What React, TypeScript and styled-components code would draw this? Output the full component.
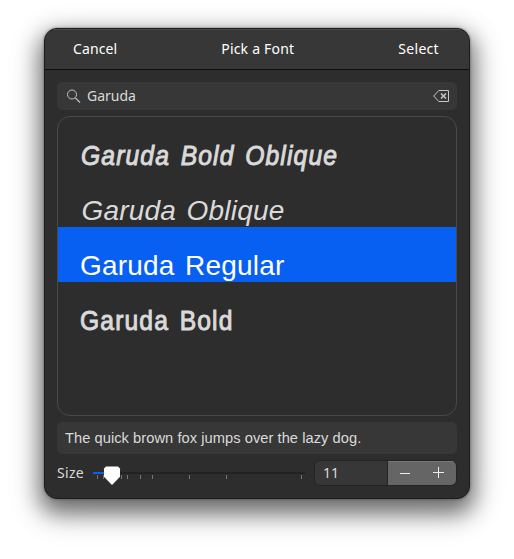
import React from "react";
import styled, { createGlobalStyle } from "styled-components";

const Global = createGlobalStyle`
  * { box-sizing: border-box; }
  body { margin: 0; background: #fff; overflow: hidden; }
`;

const Desktop = styled.main`
  width: 514px;
  height: 559px;
  padding: 28px 44px 0;
  font-family: "Noto Sans", sans-serif;
`;

const Dialog = styled.section`
  width: 426px;
  height: 471px;
  border-radius: 13px;
  overflow: hidden;
  border: 1px solid #1c1c1c;
  background: #2d2d2d;
  box-shadow: 0 0 3px rgba(0, 0, 0, 0.4), 0 10px 22px 4px rgba(0, 0, 0, 0.52), 0 12px 36px 4px rgba(0, 0, 0, 0.14);
`;

const Header = styled.header`
  display: flex;
  justify-content: space-between;
  height: 41px;
  padding: 0 30px 0 28px;
  background: #373737;
  border-bottom: 1px solid #101010;
  box-shadow: inset 0 1px #4a4a4a;
`;

const Label = styled.span<{ $w?: number; $space?: number; $color?: string; $line?: number }>`
  width: ${(p) => (p.$w ? `${p.$w}px` : "auto")};
  font-size: 14px;
  line-height: ${(p) => p.$line ?? 39}px;
  letter-spacing: ${(p) => p.$space ?? 0}px;
  color: ${(p) => p.$color ?? "#fff"};
  white-space: nowrap;
`;

const HeaderButton = styled.button`
  padding: 0;
  border: 0;
  background: none;
  font-family: inherit;
  display: flex;
`;

const Content = styled.div`
  display: flex;
  flex-direction: column;
  padding: 12px;
`;

const SearchField = styled.div`
  display: flex;
  align-items: center;
  height: 28px;
  border-radius: 5px;
  background: #373737;
  padding: 0 8px 0 9px;
`;

const SearchText = styled.div`
  flex: 1;
  display: flex;
  padding-left: 6px;
`;

const FontList = styled.ul`
  list-style: none;
  height: 300px;
  margin: 6px 0;
  padding: 0;
  border: 1px solid #494949;
  border-radius: 13px;
  overflow: hidden;
`;

const FontRow = styled.li<{ $selected?: boolean }>`
  height: 55px;
  padding: 22px 0 0 22px;
  background: ${(p) => (p.$selected ? "#0860f2" : "transparent")};
  color: ${(p) => (p.$selected ? "#fff" : "#dadada")};
`;

/* The bold faces are a thickened, slightly condensed regular, which keeps their open shapes. */
const FontName = styled.span<{ $bold?: boolean; $italic?: boolean; $shift: number }>`
  display: block;
  width: max-content;
  margin-left: ${(p) => p.$shift}px;
  font: 28px/34px "Liberation Sans", Arial, sans-serif;
  font-style: ${(p) => (p.$italic ? "italic" : "normal")};
  word-spacing: ${(p) => (p.$bold ? 3 : 2.5)}px;
  letter-spacing: ${(p) => (p.$bold ? 1.3 : 0.2)}px;
  -webkit-text-stroke: ${(p) => (p.$bold ? "1px currentColor" : "0")};
  transform: ${(p) => (p.$bold ? "scaleX(0.88)" : "none")};
  transform-origin: left;
  white-space: nowrap;
`;

const Preview = styled.div`
  height: 32px;
  border-radius: 5px;
  background: #373737;
  padding-left: 8px;
  color: #dadada;
  font: 14.67px/32px "Liberation Sans", Arial, sans-serif;
  letter-spacing: 0.05px;
`;

const SizeRow = styled.div`
  display: flex;
  align-items: center;
  height: 26px;
  margin-top: 6px;
`;

const Slider = styled.svg`
  display: block;
  width: 212px;
  height: 26px;
  margin-right: 9px;
  overflow: visible;
`;

const Spin = styled.div`
  display: flex;
  width: 143px;
  height: 26px;
  border: 1px solid #242424;
  border-radius: 6px;
  overflow: hidden;
`;

const SpinValue = styled.div`
  display: flex;
  width: 73px;
  padding-left: 8px;
  background: #373737;
  border-right: 1px solid #242424;
`;

const SpinButtons = styled.div`
  flex: 1;
  background: #656565;
  box-shadow: inset 0 1px #777;
`;

const fonts = [
  { name: "Garuda Bold Oblique", bold: true, italic: true, shift: 1 },
  { name: "Garuda Oblique", italic: true, shift: 1.5 },
  { name: "Garuda Regular", selected: true, shift: 0 },
  { name: "Garuda Bold", bold: true, shift: 0 },
];

const ticks = [4, 10, 28, 34, 47, 59, 96, 133, 208];

export default function App() {
  return (
    <Desktop>
      <Global />
      <Dialog>
        <Header>
          <HeaderButton><Label $space={0.1}>Cancel</Label></HeaderButton>
          <Label $space={0.2}>Pick a Font</Label>
          <HeaderButton><Label $space={0.3}>Select</Label></HeaderButton>
        </Header>
        <Content>
          <SearchField>
            <svg width="15" height="16" viewBox="0 0 15 16" fill="none" stroke="#c4c4c4">
              <circle cx="6" cy="6.5" r="4.5" />
              <path d="M9.3 9.8 14 14.5" strokeWidth="1.2" />
            </svg>
            <SearchText><Label $color="#dadada" $line={28}>Garuda</Label></SearchText>
            <svg width="16" height="14" viewBox="0 0 16 14" fill="none" stroke="#c8c8c8">
              <path d="M5.8 1.5h9.7v11H5.8L.7 7z" />
              <path d="m8 4.5 5 5m0-5-5 5" strokeWidth="1.5" />
            </svg>
          </SearchField>
          <FontList>
            {fonts.map((f) => (
              <FontRow key={f.name} $selected={f.selected}>
                <FontName $bold={f.bold} $italic={f.italic} $shift={f.shift}>{f.name}</FontName>
              </FontRow>
            ))}
          </FontList>
          <Preview>The quick brown fox jumps over the lazy dog.</Preview>
          <SizeRow>
            <Label $w={36} $color="#dadada" $line={28} $space={0.3}>Size</Label>
            <Slider viewBox="0 0 212 26">
              <path d="M0 13h212" stroke="#222" strokeWidth="2" />
              <path d="M0 13h15" stroke="#0860f2" strokeWidth="2" />
              {ticks.map((x) => <path key={x} d={`M${x + 0.5} 15v4`} stroke="#777" />)}
              <path d="M13 6.5h12l2 2v8.2L19 25l-8-8.300V8.500z" fill="#fff" />
            </Slider>
            <Spin>
              <SpinValue><Label $color="#dadada" $line={24}>11</Label></SpinValue>
              <SpinButtons>
                <svg width="68" height="24" viewBox="0 0 68 24" stroke="#eee" fill="none">
                  <path d="M12 12.500h10M45 11.500h11M50.500 6v11" />
                </svg>
              </SpinButtons>
            </Spin>
          </SizeRow>
        </Content>
      </Dialog>
    </Desktop>
  );
}
